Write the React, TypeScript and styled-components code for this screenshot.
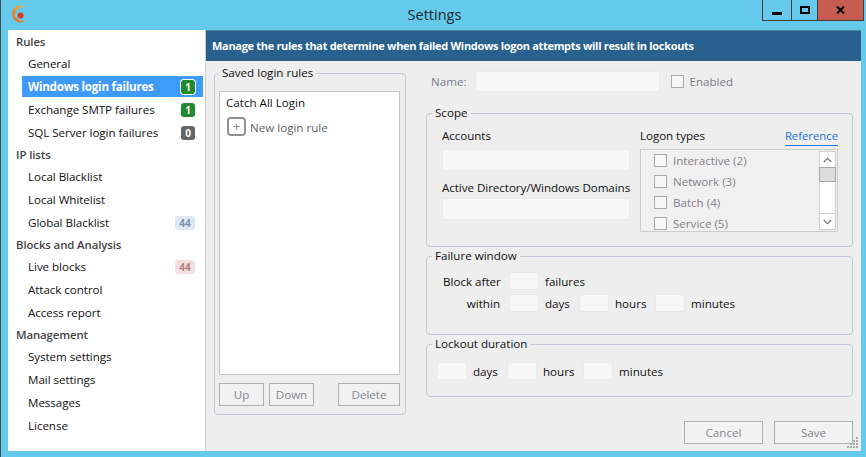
import React from "react";
import styled, { createGlobalStyle } from "styled-components";

const Global = createGlobalStyle`
  html, body { margin: 0; padding: 0; height: 457px; overflow: hidden; background: #65c9ec; }
  #root { height: 457px; }
  * { box-sizing: border-box; }
`;

const Win = styled.div`
  width: 866px; height: 457px; background: #65c9ec; display: flex; flex-direction: column;
  font-family: "Open Sans", "Noto Sans", sans-serif; font-size: 12px; color: #111;
  border-left: 1px solid #3f4a50; padding: 0 5px 6px 7px; position: relative;
`;
const TitleBar = styled.header`
  height: 30px; flex: none; display: grid; grid-template-columns: 1fr auto 1fr; align-items: start; margin-right: -3px;
`;
const Logo = styled.svg`width: 18px; height: 18px; margin: 5px 0 0 2px;`;
const Title = styled.div`font-size: 14.5px; line-height: 30px; color: #1c2a30; margin-right: 3px;`;
const Controls = styled.div`justify-self: end; display: flex; height: 21px; border: 1px solid #4a3a3a; border-top: 0; background: #65c9ec;`;
const Ctl = styled.div<{ $w: number; $close?: boolean; $drop?: number }>`
  width: ${p => p.$w}px; display: flex; align-items: center; justify-content: center;
  background: ${p => (p.$close ? "#c75c50" : "transparent")};
  padding-top: ${p => p.$drop ?? 0}px;
  & + & { border-left: 1px solid #4a3a3a; }
`;
const Body = styled.div`flex: 1; display: flex; min-height: 0;`;
const Sidebar = styled.nav`width: 198px; flex: none; display: flex; flex-direction: column; background: #fff; padding: 1px 0 0 0; border-right: 1px solid #cfcfcf;`;
const Heading = styled.div`height: 21px; flex: none; line-height: 21px; padding-left: 8px; color: #444; font-weight: 600; font-size: 11.4px; letter-spacing: -0.1px;`;
const Item = styled.div<{ $active?: boolean }>`
  height: 21px; flex: none; margin: 1px 2px 1px 14px; padding: 0 8px 0 6px; display: flex; align-items: center; justify-content: space-between;
  font-weight: ${p => (p.$active ? 700 : 400)}; font-size: 11.6px;
  letter-spacing: ${p => (p.$active ? "-0.25px" : "-0.05px")};
  color: ${p => (p.$active ? "#fff" : "#111")}; background: ${p => (p.$active ? "#3f9bfa" : "transparent")};
  white-space: nowrap;
`;
const Badge = styled.span<{ $bg: string; $fg: string; $ring?: boolean; $wide?: boolean }>`
  width: ${p => (p.$wide ? 20 : 14)}px; height: 14px; border-radius: 3px; font-size: 10px; font-weight: 700; line-height: 14px; text-align: center; letter-spacing: 0;
  background: ${p => p.$bg}; color: ${p => p.$fg};
  ${p => (p.$ring ? "box-shadow: 0 0 0 1px #fff;" : "")}
`;
const Main = styled.main`flex: 1; background: #eeeeee; display: flex; flex-direction: column; min-width: 0;`;
const Banner = styled.div`
  height: 31px; flex: none; background: #28618e; border-top: 1px solid #4d86ac; color: #fff; font-weight: 700; font-size: 11px;
  letter-spacing: -0.31px; line-height: 30px; padding-left: 6px; white-space: nowrap;
`;
const Columns = styled.div`flex: 1; display: grid; grid-template-columns: 192px 427px; column-gap: 20px; padding: 4px 8px 0; align-items: start;`;
const Group = styled.fieldset<{ $h: number }>`
  margin: 0; padding: 0; border: 1px solid #c6c8d6; border-radius: 4px; height: ${p => p.$h}px; min-width: 0; position: relative;
`;
const Legend = styled.legend<{ $inset?: number }>`
  margin-left: ${p => p.$inset ?? 5}px; padding: 0 3px; font-size: 11.6px; line-height: 16px; color: #111;
`;
const SavedInner = styled.div`display: flex; flex-direction: column; padding: 10px 5px 8px 4px; height: 100%;`;
const List = styled.div`height: 284px; flex: none; background: #fff; border: 1px solid #c4c4c4; padding: 1px 6px;`;
const ListRow = styled.div`line-height: 20px; font-size: 11.6px;`;
const NewRow = styled.div`display: flex; align-items: center; gap: 4px; color: #5f5f68; margin-top: 4px; font-size: 11.6px; margin-left: 1px;`;
const NewLabel = styled.span`padding-top: 2px;`;
const Plus = styled.span`
  width: 19px; height: 19px; border: 2px solid #929292; border-radius: 4px; display: flex; align-items: center; justify-content: center; color: #888; font-size: 13px; line-height: 1;
`;
const BtnRow = styled.div`display: flex; margin-top: 8px; gap: 5px;`;
const Btn = styled.button<{ $w: number; $push?: boolean }>`
  width: ${p => p.$w}px; height: 23px; padding: 0; background: #f2f2f2; border: 1px solid #adb0b0; color: #85858f;
  font: inherit; font-size: 11.6px; ${p => (p.$push ? "margin-left: auto;" : "")}
`;
const Right = styled.div`display: flex; flex-direction: column; padding-top: 6px;`;
const NameRow = styled.div`display: flex; align-items: center; height: 21px; padding-left: 5px; margin-bottom: 13px; color: #7b7b85; font-size: 11.6px;`;
const Field = styled.div<{ $w: number; $h: number }>`
  width: ${p => p.$w}px; height: ${p => p.$h}px; flex: none; background: #f7f7f7; border: 1px solid #eaeaea;
`;
const Check = styled.span`width: 13px; height: 13px; flex: none; background: #f7f7f7; border: 1px solid #a9a9a9;`;
const NameField = styled(Field)`margin: 0 11px 0 9px;`;
const EnabledLabel = styled.span`margin-left: 5px;`;
const ScopeGrid = styled.div`display: grid; grid-template-columns: 188px 198px; column-gap: 10px; padding: 7px 0 0 15px;`;
const Lab = styled.div`line-height: 16px; font-size: 11.6px; white-space: nowrap; letter-spacing: -0.05px;`;
const FieldLab = styled(Lab)`margin: 9px 0 2px;`;
const FirstLab = styled(Lab)`margin-bottom: 5px;`;
const LogonHead = styled.div`display: flex; justify-content: space-between; height: 16px; margin-bottom: 5px;`;
const RefLink = styled.span`color: #1a73e0; font-size: 11.3px; line-height: 16px; height: 18px; border-bottom: 1px solid #1a7ae8;`;
const LogonBox = styled.div`height: 83px; border: 1px solid #cccccc; background: #f0f0f0; position: relative; overflow: hidden; padding: 0 0 0 13px; color: #85808a; font-size: 11.6px;`;
const LogonRow = styled.div`display: flex; align-items: center; gap: 6px; height: 21px;`;
const Scroll = styled.div`
  position: absolute; right: 1px; top: 1px; bottom: 1px; width: 17px; background: #fff; border: 1px solid #cfcfcf; display: flex; flex-direction: column; color: #777;
`;
const ScrollEnd = styled.div`height: 15px; flex: none; display: flex; align-items: center; justify-content: center;`;
const Thumb = styled.div`height: 15px; flex: none; background: #dcdcdc; border: 1px solid #a8a8a8; margin: 0 -1px;`;
const Spacer = styled.div`flex: 1; border-bottom: 1px solid #cfcfcf;`;
const Stack = styled.div`display: flex; flex-direction: column; gap: 1px;`;
const TimeRows = styled.div<{ $top: number; $left: number }>`
  padding: ${p => p.$top}px 0 0 ${p => p.$left}px; display: flex; flex-direction: column; gap: 4px;
`;
const TimeRow = styled.div`display: flex; align-items: center; height: 18px; font-size: 11.6px;`;
const RowLab = styled.span`width: 66px; flex: none; padding-right: 9px; text-align: right; white-space: nowrap;`;
const Unit = styled.span<{ $w: number }>`width: ${p => p.$w}px; flex: none; padding-left: 6px;`;
const Footer = styled.div`display: flex; justify-content: flex-end; gap: 11px; margin-top: 24px;`;
const Grip = styled.svg`position: absolute; right: 7px; bottom: 8px; width: 12px; height: 12px;`;

const Chevron = ({ up }: { up?: boolean }) => (
  <svg width="9" height="6" viewBox="0 0 9 6">
    <path d={up ? "M.8 5 4.5 1.3 8.2 5" : "M.8 1 4.5 4.7 8.2 1"} fill="none" stroke="#777" strokeWidth="1.2" />
  </svg>
);

export default function App() {
  return (
    <Win>
      <Global />
      <TitleBar>
        <Logo viewBox="0 0 18 18">
          <defs>
            <linearGradient id="sw" x1="0.8" y1="0" x2="0.2" y2="1">
              <stop offset="0" stopColor="#f6b040" />
              <stop offset="0.5" stopColor="#f08a24" />
              <stop offset="1" stopColor="#ea6a1c" />
            </linearGradient>
          </defs>
          <path d="M15.500 2A8.500 8.500 0 1 0 16.500 15 9 9 0 0 1 4.500 10.500 9 9 0 0 1 15.500 2Z" fill="url(#sw)" />
          <circle cx="10.500" cy="10.500" r="3" fill="#e0381c" />
        </Logo>
        <Title>Settings</Title>
        <Controls>
          <Ctl $w={28} $drop={6}><svg width="10" height="3"><rect width="10" height="3" fill="#000" /></svg></Ctl>
          <Ctl $w={26}><svg width="10" height="8"><rect x="1" y="1" width="8" height="6" fill="none" stroke="#000" strokeWidth="2" /></svg></Ctl>
          <Ctl $w={46} $close><svg width="9" height="8" viewBox="0 0 9 8"><path d="M1 .5 8 7.500M8 .5 1 7.500" stroke="#000" strokeWidth="2" /></svg></Ctl>
        </Controls>
      </TitleBar>
      <Body>
        <Sidebar>
          <Heading>Rules</Heading>
          <Item>General</Item>
          <Item $active>Windows login failures<Badge $bg="#228a2e" $fg="#fff" $ring>1</Badge></Item>
          <Item>Exchange SMTP failures<Badge $bg="#228a2e" $fg="#fff">1</Badge></Item>
          <Item>SQL Server login failures<Badge $bg="#666" $fg="#fff">0</Badge></Item>
          <Heading>IP lists</Heading>
          <Item>Local Blacklist</Item>
          <Item>Local Whitelist</Item>
          <Item>Global Blacklist<Badge $wide $bg="#dde8f3" $fg="#7d92ad">44</Badge></Item>
          <Heading>Blocks and Analysis</Heading>
          <Item>Live blocks<Badge $wide $bg="#f3dfdf" $fg="#b57c7c">44</Badge></Item>
          <Item>Attack control</Item>
          <Item>Access report</Item>
          <Heading>Management</Heading>
          <Item>System settings</Item>
          <Item>Mail settings</Item>
          <Item>Messages</Item>
          <Item>License</Item>
        </Sidebar>
        <Main>
          <Banner>Manage the rules that determine when failed Windows logon attempts will result in lockouts</Banner>
          <Columns>
            <Group $h={350}>
              <Legend $inset={4}>Saved login rules</Legend>
              <SavedInner>
                <List>
                  <ListRow>Catch All Login</ListRow>
                  <NewRow><Plus>+</Plus><NewLabel>New login rule</NewLabel></NewRow>
                </List>
                <BtnRow>
                  <Btn $w={45}>Up</Btn>
                  <Btn $w={45}>Down</Btn>
                  <Btn $w={62} $push>Delete</Btn>
                </BtnRow>
              </SavedInner>
            </Group>
            <Right>
              <NameRow>
                Name:
                <NameField $w={185} $h={21} />
                <Check />
                <EnabledLabel>Enabled</EnabledLabel>
              </NameRow>
              <Stack>
                <Group $h={142}>
                  <Legend>Scope</Legend>
                  <ScopeGrid>
                    <div>
                      <FirstLab>Accounts</FirstLab>
                      <Field $w={188} $h={22} />
                      <FieldLab>Active Directory/Windows Domains</FieldLab>
                      <Field $w={188} $h={22} />
                    </div>
                    <div>
                      <LogonHead><Lab>Logon types</Lab><RefLink>Reference</RefLink></LogonHead>
                      <LogonBox>
                        <LogonRow><Check />Interactive (2)</LogonRow>
                        <LogonRow><Check />Network (3)</LogonRow>
                        <LogonRow><Check />Batch (4)</LogonRow>
                        <LogonRow><Check />Service (5)</LogonRow>
                        <Scroll>
                          <ScrollEnd><Chevron up /></ScrollEnd>
                          <Thumb />
                          <Spacer />
                          <ScrollEnd><Chevron /></ScrollEnd>
                        </Scroll>
                      </LogonBox>
                    </div>
                  </ScopeGrid>
                </Group>
                <Group $h={87}>
                  <Legend>Failure window</Legend>
                  <TimeRows $top={8} $left={16}>
                    <TimeRow><RowLab>Block after</RowLab><Field $w={30} $h={18} /><Unit $w={40}>failures</Unit></TimeRow>
                    <TimeRow>
                      <RowLab>within</RowLab>
                      <Field $w={30} $h={18} /><Unit $w={40}>days</Unit>
                      <Field $w={30} $h={18} /><Unit $w={46}>hours</Unit>
                      <Field $w={30} $h={18} /><Unit $w={60}>minutes</Unit>
                    </TimeRow>
                  </TimeRows>
                </Group>
                <Group $h={61}>
                  <Legend>Lockout duration</Legend>
                  <TimeRows $top={10} $left={10}>
                    <TimeRow>
                      <Field $w={30} $h={18} /><Unit $w={40}>days</Unit>
                      <Field $w={30} $h={18} /><Unit $w={46}>hours</Unit>
                      <Field $w={30} $h={18} /><Unit $w={60}>minutes</Unit>
                    </TimeRow>
                  </TimeRows>
                </Group>
              </Stack>
              <Footer>
                <Btn $w={79}>Cancel</Btn>
                <Btn $w={79}>Save</Btn>
              </Footer>
            </Right>
          </Columns>
        </Main>
      </Body>
      <Grip viewBox="0 0 12 12">
        {[[9, 0], [6, 3], [9, 3], [3, 6], [6, 6], [9, 6], [0, 9], [3, 9], [6, 9], [9, 9]].map(([x, y]) => (
          <rect key={`${x}-${y}`} x={x} y={y} width="2" height="2" fill="#aaaaaa" />
        ))}
      </Grip>
    </Win>
  );
}
